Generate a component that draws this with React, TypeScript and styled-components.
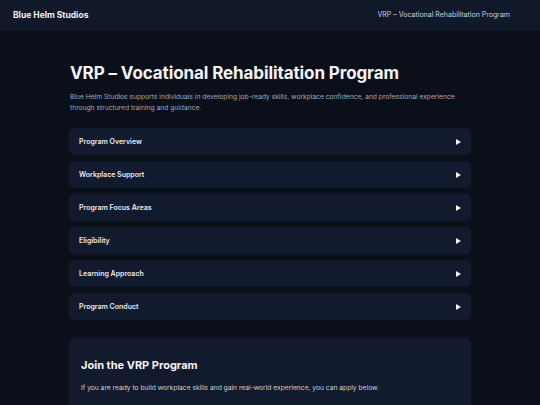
import styled, { createGlobalStyle } from 'styled-components';

const GlobalStyle = createGlobalStyle`
  html, body {
    margin: 0;
    padding: 0;
    background: #0b0f1a;
    font-family: Inter, 'Noto Sans', sans-serif;
    color: #f3f4f6;
  }
  * { box-sizing: border-box; }
`;

const Header = styled.header`
  display: flex;
  align-items: center;
  justify-content: space-between;
  height: 30px;
  padding: 0 30px 0 13px;
  background: #111829;
  border-bottom: 1px solid #151c2c;
`;

const Brand = styled.div`
  font-size: 8.5px;
  font-weight: 700;
  color: #f3f4f6;
`;

const HeaderNav = styled.div`
  font-size: 7px;
  color: #cbd1db;
`;

const Main = styled.main`
  max-width: 402px;
  margin: 0 auto;
  padding-top: 33px;
`;

const Title = styled.h1`
  margin: 0 0 9px 1px;
  font-size: 17px;
  font-weight: 700;
  letter-spacing: -0.1px;
  color: #f3f4f6;
`;

const Lead = styled.p`
  margin: 0 0 14px 1px;
  font-size: 6.7px;
  line-height: 11px;
  color: #a3a9b5;
`;

const List = styled.div`
  display: flex;
  flex-direction: column;
  gap: 6px;
`;

const Item = styled.button`
  display: flex;
  align-items: center;
  justify-content: space-between;
  height: 27px;
  padding: 0 10px 0 10px;
  border: none;
  border-radius: 5px;
  background: #121a2d;
  color: #e8eaee;
  font: inherit;
  font-size: 7px;
  font-weight: 600;
  text-align: left;
  cursor: pointer;
`;

const Arrow = styled.span`
  width: 0;
  height: 0;
  border-top: 3px solid transparent;
  border-bottom: 3px solid transparent;
  border-left: 5px solid #f3f4f6;
`;

const JoinCard = styled.section`
  margin-top: 18px;
  padding: 20px 12px 20px;
  border-radius: 6px;
  background: #121a2d;
`;

const JoinTitle = styled.h2`
  margin: 0 0 12px;
  font-size: 11px;
  font-weight: 700;
  color: #f3f4f6;
`;

const JoinText = styled.p`
  margin: 0;
  font-size: 6.7px;
  color: #cfd3da;
`;

const sections = [
  'Program Overview',
  'Workplace Support',
  'Program Focus Areas',
  'Eligibility',
  'Learning Approach',
  'Program Conduct',
];

export default function App() {
  return (
    <>
      <GlobalStyle />
      <Header>
        <Brand>Blue Helm Studios</Brand>
        <HeaderNav>VRP – Vocational Rehabilitation Program</HeaderNav>
      </Header>
      <Main>
        <Title>VRP – Vocational Rehabilitation Program</Title>
        <Lead>
          Blue Helm Studios supports individuals in developing job-ready skills, workplace confidence, and professional experience
          <br />
          through structured training and guidance.
        </Lead>
        <List>
          {sections.map((s) => (
            <Item key={s}>
              {s}
              <Arrow />
            </Item>
          ))}
        </List>
        <JoinCard>
          <JoinTitle>Join the VRP Program</JoinTitle>
          <JoinText>
            If you are ready to build workplace skills and gain real-world experience, you can apply below.
          </JoinText>
        </JoinCard>
      </Main>
    </>
  );
}
